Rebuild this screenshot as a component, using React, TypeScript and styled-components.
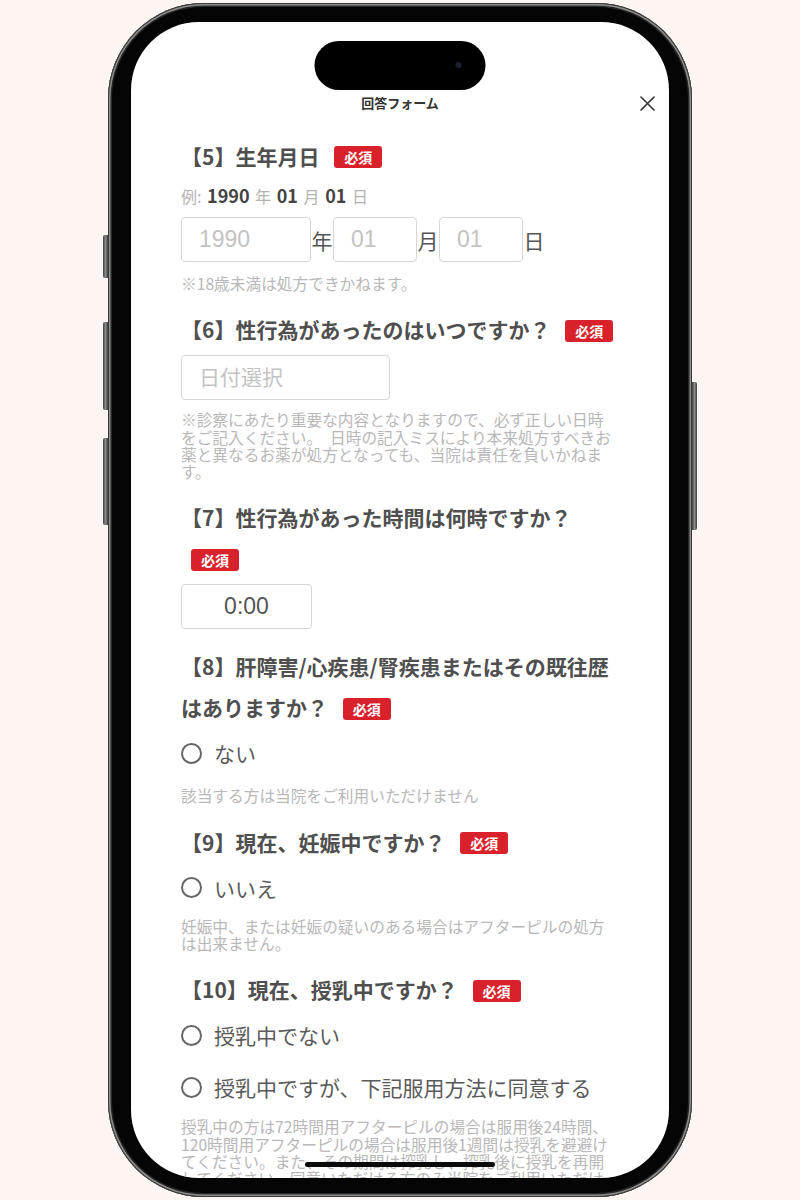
import styled, { createGlobalStyle } from 'styled-components';

const GlobalStyle = createGlobalStyle`
  html, body {
    margin: 0;
    padding: 0;
    background: #fdf5f2;
  }
  body {
    font-family: "Noto Sans CJK JP", sans-serif;
  }
  * {
    box-sizing: border-box;
  }
`;

const Page = styled.div`
  width: 800px;
  height: 1200px;
  display: flex;
  align-items: center;
  justify-content: center;
  background: #fdf5f2;
`;

// phone body: grey rim + black bezel
const Phone = styled.div`
  position: relative;
  width: 584px;
  height: 1194px;
  padding: 19px 23px;
  border-radius: 96px;
  background: #050505;
  box-shadow:
    inset 0 0 0 1px #3a3a3a,
    inset 0 0 0 2.5px #8d8d8d,
    inset 0 0 0 4px #262626;
`;

const SideButton = styled.div<{ $side: 'left' | 'right'; $top: number; $height: number }>`
  position: absolute;
  ${(p) => (p.$side === 'left' ? 'left: -5px;' : 'right: -5px;')}
  top: ${(p) => p.$top}px;
  width: 5px;
  height: ${(p) => p.$height}px;
  border-radius: ${(p) => (p.$side === 'left' ? '2px 0 0 2px' : '0 2px 2px 0')};
  background: linear-gradient(90deg, #3c3c3c, #8a8a8a 50%, #3c3c3c);
`;

const Screen = styled.div`
  position: relative;
  height: 100%;
  border-radius: 68px;
  background: #fff;
  overflow: hidden;
  display: flex;
  flex-direction: column;
`;

const Island = styled.div`
  position: absolute;
  top: 19px;
  left: 50%;
  transform: translateX(-50%);
  width: 171px;
  height: 49px;
  border-radius: 25px;
  background: #000;
  z-index: 2;
`;

const Camera = styled.div`
  position: absolute;
  top: 21px;
  left: 141px;
  width: 6px;
  height: 6px;
  border-radius: 50%;
  background: #1c2036;
`;

const HomeIndicator = styled.div`
  position: absolute;
  left: 50%;
  bottom: 11px;
  transform: translateX(-50%);
  width: 190px;
  height: 5px;
  border-radius: 3px;
  background: #0a0a0a;
  z-index: 2;
`;

const Header = styled.div`
  position: relative;
  flex-shrink: 0;
  padding-top: 70px;
  height: 92px;
  text-align: center;
`;

const Title = styled.div`
  font-size: 13px;
  line-height: 22px;
  font-weight: 700;
  color: #333;
`;

const CloseButton = styled.button`
  position: absolute;
  right: 14px;
  top: 73px;
  width: 16px;
  height: 16px;
  padding: 0;
  border: none;
  background: none;
  display: flex;
  align-items: center;
  justify-content: center;
`;

const Content = styled.div`
  padding: 22px 52px 0 50px;
`;

const Section = styled.div`
  margin-bottom: 17px;
`;

const Heading = styled.h2`
  margin: 0;
  font-size: 21px;
  line-height: 41px;
  font-weight: 700;
  color: #4f4f4f;
`;

const Badge = styled.span`
  display: inline-block;
  margin-left: 10px;
  height: 22px;
  padding: 0 10px;
  border-radius: 3px;
  background: #d9212b;
  color: #fff;
  font-size: 14px;
  line-height: 22px;
  font-weight: 700;
  vertical-align: middle;
  position: relative;
  top: -2px;
`;

const ExampleLine = styled.div`
  margin-top: 8px;
  font-size: 16px;
  line-height: 20px;
  color: #b3b3b3;
  word-spacing: 2px;
`;

const ExampleNum = styled.b`
  font-size: 18px;
  font-weight: 700;
  color: #444;
`;

const DateRow = styled.div`
  display: flex;
  align-items: center;
  margin-top: 11px;
`;

const TextBox = styled.input<{ $width: number; $size?: number }>`
  width: ${(p) => p.$width}px;
  height: 45px;
  margin: 0;
  padding: 0 17px;
  border: 1.5px solid #d6d6d6;
  border-radius: 4px;
  outline: none;
  background: #fff;
  font-family: "Liberation Sans", "Noto Sans CJK JP", sans-serif;
  font-size: ${(p) => p.$size ?? 23}px;
  color: #555;

  &::placeholder {
    color: #c3c3c3;
  }
`;

const SingleBox = styled(TextBox)`
  display: block;
  margin-top: 5px;
`;

const TimeBox = styled(SingleBox)`
  text-align: center;
`;

const Unit = styled.span`
  width: 22px;
  text-align: center;
  font-size: 21px;
  color: #555;
`;

const Hint = styled.p<{ $mt: number }>`
  margin: ${(p) => p.$mt}px 0 0;
  font-size: 15.7px;
  line-height: 17.3px;
  color: #b8b8b8;
`;

const RadioList = styled.div`
  display: flex;
  flex-direction: column;
  gap: 22px;
  margin-top: 10px;
`;

const RadioRow = styled.label`
  display: flex;
  align-items: center;
  gap: 12px;
  height: 30px;
`;

const RadioCircle = styled.span`
  width: 21px;
  height: 21px;
  border-radius: 50%;
  border: 2.5px solid #666;
  flex-shrink: 0;
`;

const RadioText = styled.span`
  font-size: 21px;
  color: #5a5a5a;
`;

const Required = () => (
  <>
    {' '}
    <Badge>必須</Badge>
  </>
);

const Radio = ({ label }: { label: string }) => (
  <RadioRow>
    <RadioCircle />
    <RadioText>{label}</RadioText>
  </RadioRow>
);

export default function App() {
  return (
    <Page>
      <GlobalStyle />
      <Phone>
        <SideButton $side="left" $top={232} $height={43} />
        <SideButton $side="left" $top={319} $height={88} />
        <SideButton $side="left" $top={435} $height={87} />
        <SideButton $side="right" $top={379} $height={148} />

        <Screen>
          <Island>
            <Camera />
          </Island>

          <Header>
            <Title>回答フォーム</Title>
            <CloseButton type="button" aria-label="閉じる">
              <svg width="15" height="15" viewBox="0 0 15 15">
                <path d="M1 1 L14 14 M14 1 L1 14" stroke="#333" strokeWidth="1.6" strokeLinecap="round" />
              </svg>
            </CloseButton>
          </Header>

          <Content>
            {/* [5] birthday */}
            <Section>
              <Heading>
                【5】生年月日
                <Required />
              </Heading>
              <ExampleLine>
                例: <ExampleNum>1990</ExampleNum> 年 <ExampleNum>01</ExampleNum> 月{' '}
                <ExampleNum>01</ExampleNum> 日
              </ExampleLine>
              <DateRow>
                <TextBox $width={130} placeholder="1990" />
                <Unit>年</Unit>
                <TextBox $width={84} placeholder="01" />
                <Unit>月</Unit>
                <TextBox $width={84} placeholder="01" />
                <Unit>日</Unit>
              </DateRow>
              <Hint $mt={13}>※18歳未満は処方できかねます。</Hint>
            </Section>

            {/* [6] date */}
            <Section>
              <Heading>
                【6】性行為があったのはいつですか？
                <Required />
              </Heading>
              <SingleBox $width={209} $size={21} placeholder="日付選択" />
              <Hint $mt={11}>
                ※診察にあたり重要な内容となりますので、必ず正しい日時をご記入ください。　日時の記入ミスにより本来処方すべきお薬と異なるお薬が処方となっても、当院は責任を負いかねます。
              </Hint>
            </Section>

            {/* [7] time */}
            <Section>
              <Heading>
                【7】性行為があった時間は何時ですか？
                <Required />
              </Heading>
              <TimeBox $width={131} defaultValue="0:00" readOnly />
            </Section>

            {/* [8] history */}
            <Section>
              <Heading>
                【8】肝障害/心疾患/腎疾患またはその既往歴はありますか？
                <Required />
              </Heading>
              <RadioList>
                <Radio label="ない" />
              </RadioList>
              <Hint $mt={19}>該当する方は当院をご利用いただけません</Hint>
            </Section>

            {/* [9] pregnancy */}
            <Section>
              <Heading>
                【9】現在、妊娠中ですか？
                <Required />
              </Heading>
              <RadioList>
                <Radio label="いいえ" />
              </RadioList>
              <Hint $mt={15}>妊娠中、または妊娠の疑いのある場合はアフターピルの処方は出来ません。</Hint>
            </Section>

            {/* [10] breastfeeding */}
            <Section>
              <Heading>
                【10】現在、授乳中ですか？
                <Required />
              </Heading>
              <RadioList>
                <Radio label="授乳中でない" />
                <Radio label="授乳中ですが、下記服用方法に同意する" />
              </RadioList>
              <Hint $mt={16}>
                授乳中の方は72時間用アフターピルの場合は服用後24時間、120時間用アフターピルの場合は服用後1週間は授乳を避避けてください。また、その期間は搾乳し、搾乳後に授乳を再開してください。同意いただける方のみ当院をご利用いただけます。
              </Hint>
            </Section>
          </Content>

          <HomeIndicator />
        </Screen>
      </Phone>
    </Page>
  );
}
